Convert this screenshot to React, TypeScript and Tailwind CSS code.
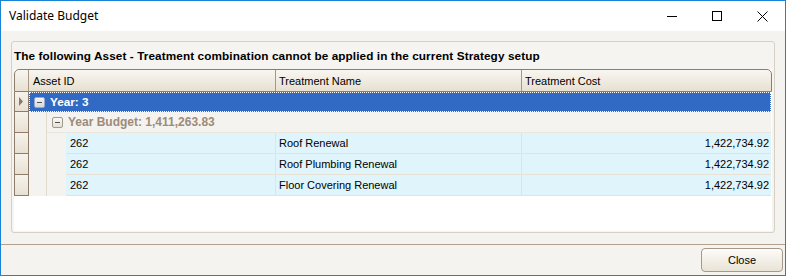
import React from "react";

const font = { fontFamily: '"Liberation Sans", Arial, sans-serif' };

function Expander({ dark }: { dark?: boolean }) {
  return (
    <span
      className={`inline-flex w-[11px] h-[11px] items-center justify-center rounded-[2px] border ${
        dark ? "border-[#9aa9c9] bg-gradient-to-b from-[#f4f4f4] to-[#d9d9d9]" : "border-[#a39a8e] bg-gradient-to-b from-[#fbfaf8] to-[#e4e0d8]"
      }`}
    >
      <span className="block w-[5px] h-[1px] bg-[#505050]" />
    </span>
  );
}

function IndCell({ arrow }: { arrow?: boolean }) {
  return (
    <div className="w-[15px] shrink-0 border-x border-b border-[#8e7b69] bg-gradient-to-b from-[#f6f3ec] to-[#e8e1d2] flex items-center justify-center">
      {arrow && (
        <svg width="5" height="9" viewBox="0 0 5 9">
          <path d="M0 0 L4 4.5 L0 9 Z" fill="#8a7a6a" />
        </svg>
      )}
    </div>
  );
}

const rows = [
  { id: "262", name: "Roof Renewal", cost: "1,422,734.92" },
  { id: "262", name: "Roof Plumbing Renewal", cost: "1,422,734.92" },
  { id: "262", name: "Floor Covering Renewal", cost: "1,422,734.92" },
];

export default function App() {
  return (
    <div
      className="w-[786px] h-[276px] border border-[#1883d7] bg-[#f4f3ef] flex flex-col text-[11px] text-black"
      style={font}
    >
      {/* Title bar */}
      <div className="h-[30px] bg-white flex items-center shrink-0">
        <div
          className="pl-[8px] text-[12px] text-black"
          style={{ fontFamily: '"Noto Sans", "Open Sans", sans-serif' }}
        >
          Validate Budget
        </div>
        <div className="ml-auto flex items-center h-full">
          <div className="w-[45px] h-full flex items-center justify-center">
            <div className="w-[10px] h-[1px] bg-black" />
          </div>
          <div className="w-[45px] h-full flex items-center justify-center">
            <div className="w-[10px] h-[10px] border border-black" />
          </div>
          <div className="w-[46px] h-full flex items-center justify-center">
            <svg width="11" height="11" viewBox="0 0 11 11">
              <path d="M0.5 0.5 L10.5 10.5 M10.5 0.5 L0.5 10.5" stroke="#000" strokeWidth="1" />
            </svg>
          </div>
        </div>
      </div>

      {/* Content */}
      <div className="flex-1 pt-[10px] pb-[11px] pl-[10px] pr-[10px] flex">
        <div className="flex-1 flex flex-col rounded-[3px] border border-[#d6d0c5] bg-[#f5f4f0]">
          <div className="h-[27px] flex items-center pl-[2px] font-bold text-[11.75px] tracking-[0.1px]">
            The following Asset - Treatment combination cannot be applied in the current Strategy setup
          </div>
          <div className="flex-1 mx-[2px] mb-[1px] bg-white flex flex-col">
            {/* Header */}
            <div className="h-[23px] flex rounded-t-[5px] border border-[#8e7d6d] bg-gradient-to-b from-[#f8f6f1] to-[#e8e1d1] overflow-hidden">
              <div className="w-[14px] shrink-0 border-r border-[#a89684]" />
              <div className="w-[247px] shrink-0 border-r border-[#a89684] flex items-center pl-[4px] pt-[1px]">Asset ID</div>
              <div className="w-[246px] shrink-0 border-r border-[#a89684] flex items-center pl-[3px] pt-[1px]">Treatment Name</div>
              <div className="flex-1 flex items-center pl-[3px] pt-[1px]">Treatment Cost</div>
            </div>

            {/* Year row */}
            <div className="h-[20px] flex">
              <IndCell arrow />
              <div className="flex-1 mr-[1px] bg-[#316ac5] border border-dotted border-white flex items-center pl-[4px] gap-[5px]">
                <Expander dark />
                <span className="font-bold text-white text-[11.75px]">Year: 3</span>
              </div>
            </div>

            {/* Budget row */}
            <div className="h-[21px] flex">
              <IndCell />
              <div className="w-[18px] shrink-0 bg-[#f4f3ef] border-r border-[#e2dbcd]" />
              <div className="flex-1 mr-[1px] bg-[#f4f3ef] border-b border-[#ebe6dc] flex items-center pl-[5px] gap-[5px]">
                <Expander />
                <span className="font-bold text-[#9d8b79] text-[12px]">Year Budget: 1,411,263.83</span>
              </div>
            </div>

            {rows.map((r, i) => (
              <div key={i} className="h-[21px] flex">
                <IndCell />
                <div className="w-[18px] shrink-0 bg-[#f4f3ef] border-r border-[#e2dbcd]" />
                <div className="w-[19px] shrink-0 bg-[#f4f3ef]" />
                <div className="flex-1 mr-[1px] flex bg-[#dff4fb] border-b border-[#e8e2d6]">
                  <div className="w-[210px] shrink-0 border-r border-[#e8e2d6] flex items-center pl-[4px]">{r.id}</div>
                  <div className="w-[246px] shrink-0 border-r border-[#e8e2d6] flex items-center pl-[3px]">{r.name}</div>
                  <div className="flex-1 flex items-center justify-end pr-[2px]">{r.cost}</div>
                </div>
              </div>
            ))}
            <div className="flex-1 bg-white" />
          </div>
        </div>
      </div>

      {/* Bottom panel */}
      <div className="h-[31px] border-t border-[#b2a190] flex items-center justify-end pr-[2px]">
        <button className="w-[82px] h-[24px] rounded-[4px] border border-[#a4998a] bg-gradient-to-b from-[#fdfcfa] to-[#e9e3d6] text-[11px] text-black" style={font}>
          Close
        </button>
      </div>
    </div>
  );
}
